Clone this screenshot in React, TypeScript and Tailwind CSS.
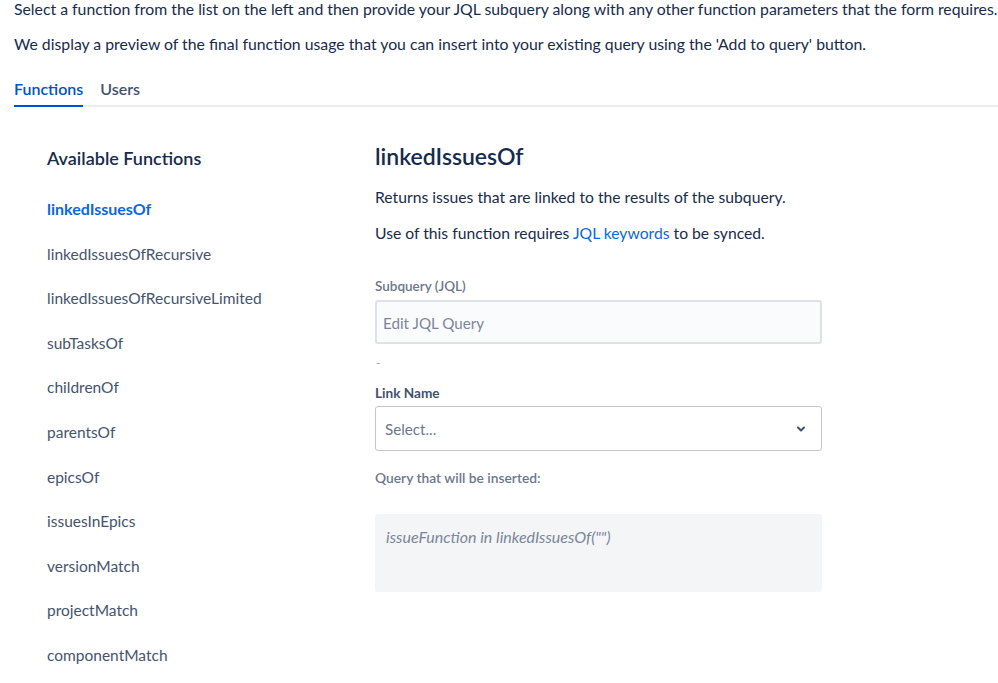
import React from "react";

const items = [
  "linkedIssuesOf",
  "linkedIssuesOfRecursive",
  "linkedIssuesOfRecursiveLimited",
  "subTasksOf",
  "childrenOf",
  "parentsOf",
  "epicsOf",
  "issuesInEpics",
  "versionMatch",
  "projectMatch",
  "componentMatch",
];

export default function App() {
  return (
    <div
      className="w-[998px] h-[683px] overflow-hidden bg-white text-[#172b4d]"
      style={{ fontFamily: '"Segoe UI", Lato, "Noto Sans", sans-serif' }}
    >
      <div className="pl-[14px]">
        <p className="text-[15.8px] leading-[20px] -mt-[1px] whitespace-nowrap">
          Select a function from the list on the left and then provide your JQL subquery along with any other function parameters that the form requires.
        </p>
        <p className="text-[15.8px] leading-[20px] mt-[15px] whitespace-nowrap">
          We display a preview of the final function usage that you can insert into your existing query using the 'Add to query' button.
        </p>
        <div className="mt-[25px] flex border-b-2 border-[#ebecf0] h-[28px]">
          <div className="text-[16px] font-semibold text-[#0052cc] border-b-2 border-[#0052cc] -mb-[2px] leading-[20px] pb-[6px]">
            Functions
          </div>
          <div className="ml-[17px] text-[16px] font-semibold text-[#42526e] leading-[20px]">Users</div>
        </div>
      </div>
      <div className="flex mt-[35px]">
        <div className="w-[375px] pl-[47px] shrink-0">
          <div className="text-[18px] font-semibold leading-[24px] text-[#172b4d] mt-[4px]">Available Functions</div>
          <ul className="mt-[29px]">
            {items.map((it, i) => (
              <li
                key={it}
                className={
                  "leading-[20px] h-[44.6px] " +
                  (i === 0 ? "text-[16px] font-bold text-[#0c66e4]" : "text-[15.5px] text-[#44546f]")
                }
              >
                {it}
              </li>
            ))}
          </ul>
        </div>
        <div className="w-[447px] shrink-0">
          <h2 className="text-[23px] font-semibold leading-[28px] text-[#172b4d] mt-0">linkedIssuesOf</h2>
          <p className="text-[15.7px] leading-[20px] mt-[17px] text-[#172b4d]">
            Returns issues that are linked to the results of the subquery.
          </p>
          <p className="text-[15.7px] leading-[20px] mt-[16px] text-[#172b4d]">
            Use of this function requires <span className="text-[#0c66e4]">JQL keywords</span> to be synced.
          </p>
          <div className="text-[13.5px] font-semibold leading-[16px] text-[#6b778c] mt-[35px]">Subquery (JQL)</div>
          <div className="mt-[6px] h-[44px] border-2 border-[#dfe1e6] bg-[#fafbfc] rounded-[3px] flex items-center px-[6px] pt-[2px] text-[15.2px] text-[#7a869a]">
            Edit JQL Query
          </div>
          <div className="text-[12px] leading-[16px] text-[#97a0af] mt-[11px] pl-[1px]">-</div>
          <div className="text-[13.6px] font-bold leading-[16px] text-[#42526e] mt-[14px]">Link Name</div>
          <div className="mt-[5px] h-[45px] border border-[#c1c7d0] bg-white rounded-[3px] flex items-center justify-between pl-[9px] pr-[14px] pt-[1px] text-[15.2px] text-[#6b778c]">
            <span>Select...</span>
            <svg width="12" height="12" viewBox="0 0 24 24" fill="none" stroke="#42526e" strokeWidth="4" strokeLinecap="round" strokeLinejoin="round">
              <path d="M6 9l6 6 6-6" />
            </svg>
          </div>
          <div className="text-[13.8px] font-semibold leading-[16px] text-[#6b778c] mt-[19px]">Query that will be inserted:</div>
          <div className="mt-[28px] h-[78px] bg-[#f4f5f7] rounded-[3px] px-[11px] pt-[11px]">
            <span className="italic text-[16px] leading-[20px] text-[#7a869a]">issueFunction in linkedIssuesOf("")</span>
          </div>
        </div>
      </div>
    </div>
  );
}
